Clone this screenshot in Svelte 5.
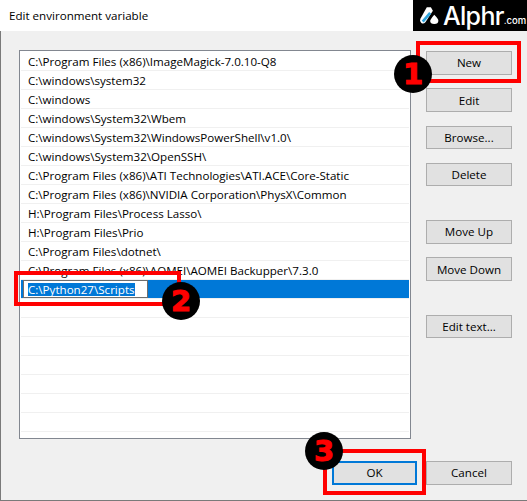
<script lang="ts">
    const paths = [
        "C:\\Program Files (x86)\\ImageMagick-7.0.10-Q8",
        "C:\\windows\\system32",
        "C:\\windows",
        "C:\\windows\\System32\\Wbem",
        "C:\\windows\\System32\\WindowsPowerShell\\v1.0\\",
        "C:\\windows\\System32\\OpenSSH\\",
        "C:\\Program Files (x86)\\ATI Technologies\\ATI.ACE\\Core-Static",
        "C:\\Program Files (x86)\\NVIDIA Corporation\\PhysX\\Common",
        "H:\\Program Files\\Process Lasso\\",
        "H:\\Program Files\\Prio",
        "C:\\Program Files\\dotnet\\",
        "C:\\Program Files (x86)\\AOMEI\\AOMEI Backupper\\7.3.0"
    ];
    const emptyRows = Array(8).fill(0);
</script>

<div class="dialog">
    <header class="titlebar">Edit environment variable</header>

    <div class="body">
        <main class="content">
            <div class="list">
                {#each paths as path}
                    <div class="row">{path}</div>
                {/each}
                <div class="row selected">
                    <span class="editor"><span class="sel">C:\Python27\Scripts</span></span>
                </div>
                {#each emptyRows as _}
                    <div class="row"></div>
                {/each}
            </div>

            <div class="actions">
                <button>New</button>
                <button>Edit</button>
                <button>Browse...</button>
                <button>Delete</button>
                <button class="spaced">Move Up</button>
                <button>Move Down</button>
                <button class="spaced">Edit text...</button>
            </div>
        </main>

        <footer class="footer">
            <button class="primary">OK</button>
            <button>Cancel</button>
        </footer>
    </div>

    <div class="logo">
        <svg viewBox="0 0 28 24" width="19" height="17" aria-hidden="true">
            <path d="M10 0 L16 0 L19 5 L8 22 Q5 25 2 23 Q-1 20 1 16 Z" fill="#fff" />
            <path d="M15 8 L4 21" stroke="#2fa3dc" stroke-width="4" fill="none" />
            <path d="M21 11 Q28 18 27 20 A6 4.5 0 0 1 15 20 Q15 18 21 11 Z" fill="#fff" />
        </svg>
        <span class="brand">Alphr</span><span class="tld">.com</span>
    </div>

    <div class="mark mark-new"></div>
    <div class="mark mark-edit"></div>
    <div class="mark mark-ok"></div>
    <div class="badge badge-1">1</div>
    <div class="badge badge-2">2</div>
    <div class="badge badge-3">3</div>
</div>

<style>
    :global(body) {
        margin: 0;
        background: #f0f0f0;
    }

    .dialog {
        position: relative;
        display: flex;
        flex-direction: column;
        width: 527px;
        height: 501px;
        overflow: hidden;
        background: #f0f0f0;
        color: #000;
        font-family: "Open Sans", "Noto Sans", sans-serif;
        font-size: 11.6px;
    }

    .titlebar {
        height: 31px;
        padding-left: 9px;
        line-height: 31px;
        background: #fff;
        flex: none;
    }

    .body {
        flex: 1;
        border-left: 1px solid #7a7a7a;
        border-bottom: 1px solid #7a7a7a;
    }

    .content {
        display: flex;
        gap: 15px;
        padding: 19px 15px 0 18px;
    }

    .list {
        box-sizing: border-box;
        width: 392px;
        height: 389px;
        padding: 1px;
        background: #fff;
        border: 1px solid #828790;
        overflow: hidden;
    }

    .row {
        box-sizing: border-box;
        height: 19px;
        padding: 1px 0 0 7px;
        line-height: 18px;
        border-bottom: 1px solid #f0f0f0;
        white-space: nowrap;
    }

    .row.selected {
        position: relative;
        background: #0078d7;
        border-bottom-color: #f0f0f0;
    }

    .editor {
        position: absolute;
        left: 2px;
        top: 0;
        display: flex;
        align-items: center;
        box-sizing: border-box;
        width: 125px;
        height: 18px;
        padding-left: 4px;
        background: #fff;
        border: 1px solid #6e6e6e;
    }

    .sel {
        line-height: 13px;
        background: #0078d7;
        color: #fff;
    }

    .actions {
        display: flex;
        flex-direction: column;
        gap: 13.75px;
        padding-top: 1px;
        width: 86px;
    }

    button {
        box-sizing: border-box;
        width: 86px;
        height: 23.5px;
        padding: 0;
        font: inherit;
        color: #000;
        background: #e1e1e1;
        border: 1px solid #adadad;
    }

    .spaced {
        margin-top: 20px;
    }

    .footer {
        display: flex;
        justify-content: flex-end;
        gap: 9px;
        padding: 22px 15px 0 0;
    }

    .primary {
        width: 85px;
        border: 2px solid #0078d7;
    }

    .logo {
        position: absolute;
        top: 0;
        right: 0;
        display: flex;
        align-items: center;
        box-sizing: border-box;
        width: 114px;
        height: 31px;
        padding-left: 7px;
        background: #000;
        color: #fff;
    }

    .brand {
        margin-left: 4px;
        font: 500 25px "Inter", sans-serif;
        letter-spacing: -0.7px;
    }

    .tld {
        margin-top: 9px;
        font: 500 9.5px "Inter", sans-serif;
    }

    .mark {
        position: absolute;
        box-sizing: border-box;
        border: 4px solid #f00;
    }

    .mark-new { left: 416px; top: 41px; width: 105px; height: 42px; }
    .mark-edit { left: 14px; top: 271px; width: 167px; height: 35px; }
    .mark-ok { left: 323px; top: 449px; width: 103px; height: 46px; }

    .badge {
        position: absolute;
        width: 38px;
        height: 38px;
        border-radius: 50%;
        background: #000;
        color: #f00;
        text-align: center;
        font: 700 29px/38px "DejaVu Sans", sans-serif;
        -webkit-text-stroke: 1px #f00;
    }

    .badge-1 { left: 394px; top: 55px; }
    .badge-2 { left: 162px; top: 282px; }
    .badge-3 { left: 305px; top: 432px; }
</style>
